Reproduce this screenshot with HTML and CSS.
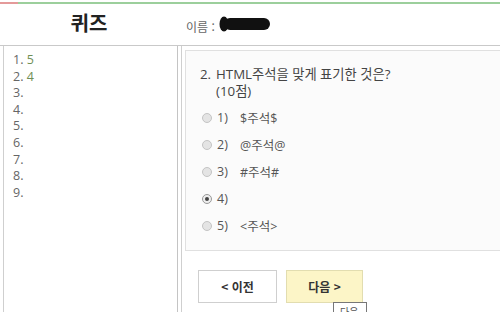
FILE: index.html
```html
<!DOCTYPE html>
<html lang="ko">
<head>
<meta charset="utf-8">
<title>퀴즈</title>
<link rel="stylesheet" href="styles.css">
</head>
<body>
<div class="topbar"><span class="red"></span><span class="green"></span></div>
<header class="header">
  <div class="title">퀴즈</div>
  <div class="name">
    <span class="name-label">이름 :</span>
    <svg class="redact" width="52" height="16" viewBox="0 0 52 16">
      <ellipse cx="5" cy="8" rx="4.5" ry="7.5" fill="#111"/>
      <rect x="5" y="2" width="46" height="12" rx="6" fill="#111"/>
    </svg>
  </div>
</header>
<main class="main">
  <aside class="side">
    <ol class="list">
      <li>1. <span class="ans">5</span></li>
      <li>2. <span class="ans">4</span></li>
      <li>3.</li>
      <li>4.</li>
      <li>5.</li>
      <li>6.</li>
      <li>7.</li>
      <li>8.</li>
      <li>9.</li>
    </ol>
  </aside>
  <section class="content">
    <div class="qbox">
      <div class="question">
        <span class="qnum">2.</span>
        <span class="qtext">HTML주석을 맞게 표기한 것은?<br>(10점)</span>
      </div>
      <div class="options">
        <div class="opt"><span class="radio"></span><span class="onum">1)</span><span>$주석$</span></div>
        <div class="opt"><span class="radio"></span><span class="onum">2)</span><span>@주석@</span></div>
        <div class="opt"><span class="radio"></span><span class="onum">3)</span><span>#주석#</span></div>
        <div class="opt"><span class="radio checked"></span><span class="onum">4)</span><span></span></div>
        <div class="opt"><span class="radio"></span><span class="onum">5)</span><span>&lt;주석&gt;</span></div>
      </div>
    </div>
    <div class="buttons">
      <button class="btn prev">&lt; 이전</button>
      <button class="btn next">다음 &gt;</button>
      <div class="tooltip">다음</div>
    </div>
  </section>
</main>
</body>
</html>
```
FILE: styles.css
```css
html, body {
  margin: 0;
  padding: 0;
  background: #ffffff;
  overflow: hidden;
}
body {
  width: 500px;
  height: 312px;
  font-family: "Open Sans", "Noto Sans CJK KR", sans-serif;
  color: #555;
}
.topbar {
  display: flex;
  height: 2px;
  margin-top: 2px;
}
.topbar .red {
  width: 18px;
  background: #e49a9a;
}
.topbar .green {
  flex: 1;
  background: #9ccf9c;
}
.header {
  display: flex;
  align-items: center;
  height: 42px;
  border-bottom: 1px solid #c9c9c9;
  box-sizing: border-box;
}
.title {
  width: 178px;
  text-align: center;
  font-family: "Noto Sans CJK KR", sans-serif;
  font-weight: 700;
  font-size: 20px;
  line-height: 24px;
  color: #222;
  padding-bottom: 4px;
}
.name {
  display: flex;
  align-items: center;
  margin-left: 8px;
}
.name-label {
  font-family: "Noto Sans CJK KR", sans-serif;
  font-size: 12px;
  color: #666;
  line-height: 14px;
  padding-top: 4px;
}
.redact {
  margin-left: 4px;
  margin-top: -1px;
}
.main {
  display: flex;
  height: 266px;
}
.side {
  width: 173px;
  margin-left: 3px;
  border-left: 1px solid #cfcfcf;
  border-right: 1px solid #c4c4c4;
}
.list {
  list-style: none;
  margin: 0;
  padding: 6px 0 0 9px;
  font-size: 12.5px;
  line-height: 16.6px;
  color: #666;
}
.ans {
  color: #6f8f55;
}
.content {
  flex: 1;
  margin-left: 3px;
  border-left: 1px solid #cfcfcf;
  padding: 4px 0 0 3px;
  position: relative;
}
.qbox {
  height: 201px;
  box-sizing: border-box;
  border: 1px solid #e0e0e0;
  border-right: none;
  background: #fbfbfb;
  padding: 15px 0 0 14px;
}
.question {
  display: flex;
  font-size: 13.3px;
  line-height: 17px;
  color: #444;
}
.qnum {
  width: 16px;
  flex: none;
}
.options {
  margin-top: 4px;
}
.opt {
  display: flex;
  align-items: center;
  height: 27px;
  margin-left: 2px;
  font-size: 12.5px;
  color: #555;
}
.radio {
  width: 8px;
  height: 8px;
  border-radius: 50%;
  border: 1px solid #c4c4c4;
  background: #e4e4e4;
  box-sizing: content-box;
  flex: none;
  position: relative;
}
.radio.checked {
  border-color: #999;
  background: #eee;
}
.radio.checked::after {
  content: "";
  position: absolute;
  left: 2px;
  top: 2px;
  width: 4px;
  height: 4px;
  border-radius: 50%;
  background: #444;
}
.onum {
  width: 23px;
  margin-left: 5px;
  flex: none;
}
.buttons {
  display: flex;
  gap: 9px;
  margin: 19px 0 0 13px;
}
.btn {
  height: 33px;
  box-sizing: border-box;
  font-family: "Noto Sans CJK KR", sans-serif;
  font-size: 12px;
  font-weight: 700;
  color: #333;
  padding: 0;
  border-radius: 0;
}
.prev {
  width: 79px;
  background: #ffffff;
  border: 1px solid #cfcfcf;
}
.next {
  width: 77px;
  background: #fcf5c7;
  border: 1px solid #e2ddb0;
}
.tooltip {
  position: absolute;
  left: 151px;
  top: 256px;
  width: 34px;
  height: 20px;
  box-sizing: border-box;
  border: 1px solid #777;
  background: #fff;
  font-family: "Noto Sans CJK KR", sans-serif;
  font-size: 10px;
  line-height: 10px;
  color: #555;
  padding: 4px 0 0 6px;
}
```
